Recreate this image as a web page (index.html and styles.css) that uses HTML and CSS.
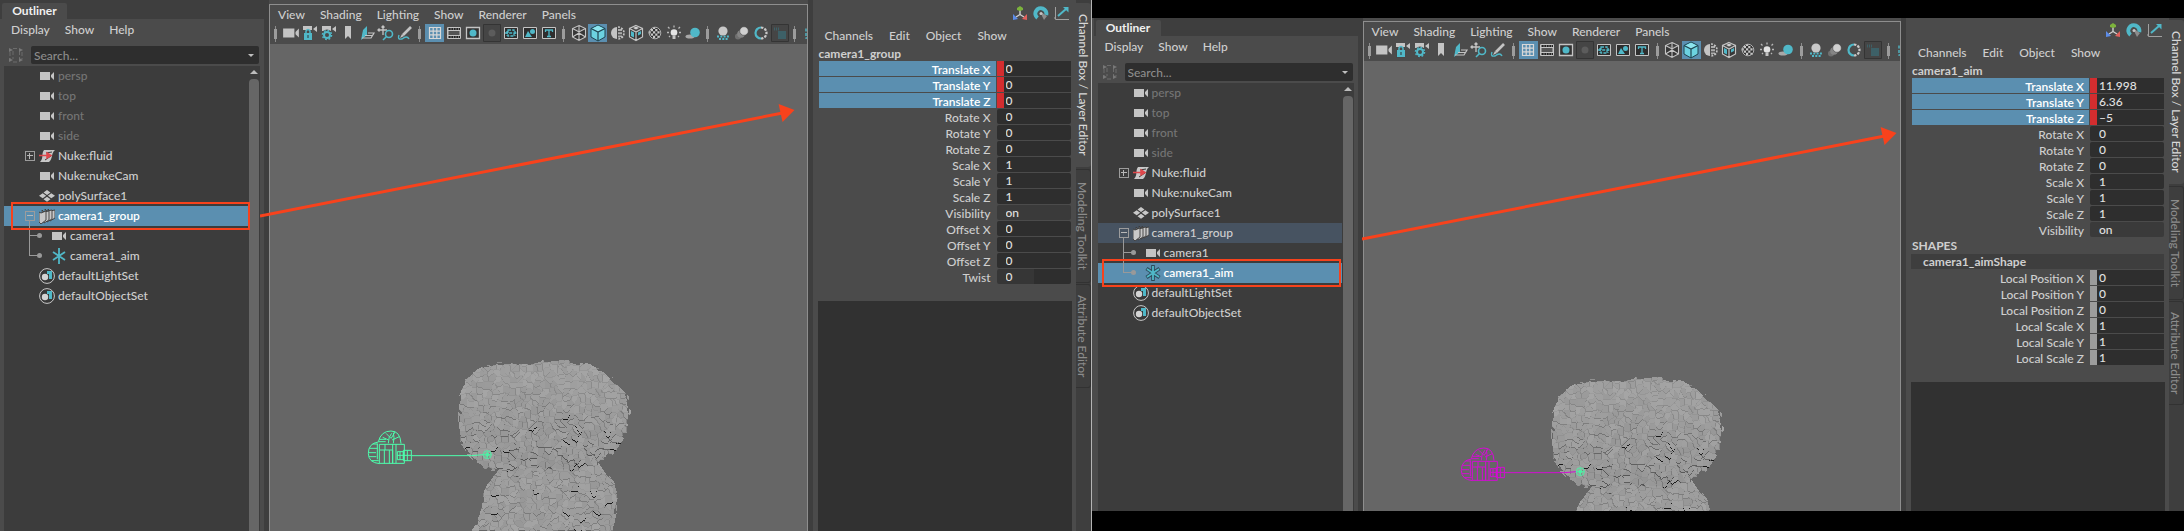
FILE: index.html
```html
<!DOCTYPE html>
<html lang="en">
<head>
<meta charset="utf-8">
<title>Outliner and Channel Box</title>
<link rel="stylesheet" href="styles.css">
</head>
<body>
<svg class="sprite" aria-hidden="true">
  <symbol id="i-cam" viewBox="0 0 16 16"><path fill="#c4c4c4" d="M1 4h10v8H1zM15 4v8l-3-3V7z"/></symbol>
  <symbol id="i-fluid" viewBox="0 0 16 16"><path fill="#c8c8c8" d="M5 2h11c-4 3-2 9-6 12H1c4-4 1-8 4-12z"/><path stroke="#3c3c3c" fill="none" d="M7 5l6-1M6 12l6-4"/><path stroke="#e0484c" stroke-width="1.500" fill="#e0484c" d="M0 7.500h8M8 5l4 2.500-4 2.500z"/></symbol>
  <symbol id="i-poly" viewBox="0 0 16 16"><path fill="#c8c8c8" d="M8 2l3.500 2.500L8 7 4.500 4.500zM3.700 5.300l3.500 2.500-3.500 2.500L0 7.800zM12.300 5.300L16 7.800l-3.700 2.500-3.500-2.500zM8 8.700l3.500 2.500L8 13.700l-3.500-2.500z"/></symbol>
  <symbol id="i-group" viewBox="0 0 16 16"><g fill="#c8c8c8" stroke="#3a3a3a" stroke-width=".9"><path d="M9 1l2 2 5-1v8l-5 3z"/><path d="M6 1l2 2 5-1v9l-5 3z"/><path d="M3 2l2 2 5-1v9l-5 3z"/><path d="M0 4l2 1 5-2v9l-5 4-2-2z"/></g></symbol>
  <symbol id="i-aim" viewBox="0 0 16 16"><path stroke="#50b8c8" stroke-width="1.800" d="M8 0v16M2 4l12 8M14 4L2 12"/></symbol>
  <symbol id="i-aims" viewBox="0 0 16 16"><path stroke="#2c4a58" stroke-width="3.600" d="M8 0v16M1.500 3.500l13 9M14.500 3.500l-13 9"/><path stroke="#50b8c8" stroke-width="1.800" d="M8 1v14M2 4l12 8M14 4L2 12"/></symbol>
  <symbol id="i-set" viewBox="0 0 16 16"><circle cx="8" cy="8" r="7.400" fill="#383838" stroke="#c8c8c8"/><path fill="#50b8c8" d="M8 3h5v8h-3V6H8z"/><circle cx="6" cy="9" r="3.200" fill="#d4d4d4"/></symbol>
  <symbol id="i-lock" viewBox="0 0 18 18"><path fill="#c4c4c4" d="M2 2h9v5H2zM16 2v6l-4-3z"/><path fill="#484848" d="M2 6h9v11H2z"/><path fill="#50b8c8" d="M3 9h8v7H3z"/><path fill="none" stroke="#50b8c8" stroke-width="1.500" d="M5 9V7q2-3 4 0v2"/><path fill="#333" d="M6.500 11h1v3h-1z"/></symbol>
  <symbol id="i-gear" viewBox="0 0 18 18"><path fill="#c4c4c4" d="M2 2h9v5H2zM16 2v6l-4-3z"/><circle cx="7" cy="11" r="5.500" fill="#484848"/><circle cx="7" cy="11" r="3" fill="none" stroke="#50b8c8" stroke-width="2"/><circle cx="7" cy="11" r="4.600" fill="none" stroke="#50b8c8" stroke-width="1.400" stroke-dasharray="1.800 1.800"/></symbol>
  <symbol id="i-mark" viewBox="0 0 18 18"><path fill="#c4c4c4" d="M6 2h6v13l-3-3-3 3z"/></symbol>
  <symbol id="i-plane" viewBox="0 0 18 18"><path fill="#50b8c8" d="M9 2v9l-6 5 2-10z"/><path fill="none" stroke="#c4c4c4" stroke-width="1.200" d="M10 9h6l-3 5H4M7 11.500h7"/></symbol>
  <symbol id="i-pan" viewBox="0 0 18 18"><path stroke="#c4c4c4" stroke-width="1.300" fill="none" d="M6 2v9M1 6h9M4.500 3.500L6 2l1.500 1.500M2.500 4.500L1 6l1.500 1.500"/><circle cx="12" cy="10" r="3.500" fill="#484848" stroke="#50b8c8" stroke-width="1.600"/><path stroke="#50b8c8" stroke-width="1.600" d="M9.500 12.500L6 16"/></symbol>
  <symbol id="i-pen" viewBox="0 0 18 18"><path stroke="#c4c4c4" stroke-width="2.600" d="M15 3L7 11"/><path fill="#c4c4c4" d="M6 10l2 2-4 2z"/><path stroke="#50b8c8" stroke-width="1.400" fill="none" d="M3 11q-2 5 3 4 5-4 7 0"/></symbol>
  <symbol id="i-grid" viewBox="0 0 18 18"><path fill="none" stroke="#d8d8d8" stroke-width="1.200" d="M3.500 3.500h11v11h-11zM7.200 3.500v11M10.800 3.500v11M3.500 7.200h11M3.500 10.800h11"/></symbol>
  <symbol id="i-film" viewBox="0 0 18 18"><path fill="#222" stroke="#c4c4c4" d="M2.500 3.500h13v11h-13z"/><path fill="#555" stroke="#c4c4c4" d="M3 6.500h12v5H3z"/><path stroke="#c4c4c4" stroke-dasharray="1 1.500" d="M3 5h12M3 13h12"/></symbol>
  <symbol id="i-dot" viewBox="0 0 18 18"><path fill="#333" stroke="#c4c4c4" stroke-width="1.300" d="M2.500 3.500h13v11h-13z"/><circle cx="9" cy="9" r="3.500" fill="#50b8c8"/></symbol>
  <symbol id="i-dim" viewBox="0 0 18 18"><path fill="#454545" stroke="#343434" d="M.5.5h17v17H.5z"/><circle cx="9" cy="9" r="3.500" fill="#5c5c5c"/></symbol>
  <symbol id="i-gate" viewBox="0 0 18 18"><path fill="#2e2e2e" stroke="#c4c4c4" d="M2.500 3.500h13v11h-13z"/><path fill="none" stroke="#50b8c8" stroke-width="1.300" stroke-dasharray="3 1.200" d="M6 6h6v6H6zM3 9h12M5 7v5M13 7v5"/></symbol>
  <symbol id="i-safe" viewBox="0 0 18 18"><path fill="#2e2e2e" stroke="#c4c4c4" d="M2.500 3.500h13v11h-13z"/><path fill="#50b8c8" d="M4 13l3-6 4 6z"/><circle cx="11.500" cy="7.500" r="2.500" fill="#50b8c8"/></symbol>
  <symbol id="i-title" viewBox="0 0 18 18"><path fill="#2e2e2e" stroke="#c4c4c4" d="M2.500 3.500h13v11h-13z"/><path fill="none" stroke="#50b8c8" stroke-width="1.300" d="M5.500 8V6h7v2M9 6v6.500M7 12.500h4"/></symbol>
  <symbol id="i-wire" viewBox="0 0 18 18"><path fill="#363636" stroke="#c4c4c4" stroke-width="1.100" d="M9 1.500l6.500 3v8.500L9 16.500 2.500 13V4.500zM2.500 4.500L9 8l6.500-3.500M9 8v8.500M9 1.500V8M2.500 13L9 9l6.500 4"/></symbol>
  <symbol id="i-cube" viewBox="0 0 18 18"><path fill="#6cd2e0" stroke="#1f4450" d="M9 1l7 3.500V13l-7 4-7-4V4.500z"/><path fill="#8ce4ee" d="M9 1.800L15 4.700 9 8 3 4.700z"/><path fill="none" stroke="#1f4450" stroke-width="1.200" d="M2 4.500L9 8l7-3.500M9 8v9"/></symbol>
  <symbol id="i-half" viewBox="0 0 18 18"><path fill="#c4c4c4" d="M9 3a6 6 0 0 0 0 12z"/><path fill="none" stroke="#c4c4c4" stroke-width="1.600" stroke-dasharray="2 1.200" d="M10 3a6 6 0 0 1 0 12M11 5v9M13 5v8"/></symbol>
  <symbol id="i-tex" viewBox="0 0 18 18"><path fill="#363636" stroke="#c4c4c4" stroke-width="1.200" d="M9 1.500l6.500 3v8.500L9 16.500 2.500 13V4.500zM2.500 4.500L9 8l6.500-3.500M9 8v8.500"/><path fill="#50b8c8" d="M4 7l3 1.500v5L4 12zM11 8.500L14 7v3l-3 1.500z"/><path fill="#d0d0d0" d="M9 2.500l3 1.500-3 1.500L6 4z"/></symbol>
  <symbol id="i-check" viewBox="0 0 18 18"><circle cx="9" cy="9" r="6" fill="#303030"/><path stroke="#c8c8c8" stroke-width="2.200" stroke-dasharray="2.200 2.200" d="M7 4h4.400M4.800 6.200h8.800M2.600 8.400h13.200M4.800 10.600h8.800M7 12.800h6.600"/><circle cx="9" cy="9" r="5.800" fill="none" stroke="#b0b0b0"/></symbol>
  <symbol id="i-bulb" viewBox="0 0 18 18"><circle cx="9" cy="8.500" r="3.300" fill="#e4e4e4"/><path fill="#c4c4c4" d="M7.500 12h3v3h-3z"/><path stroke="#b8b8b8" stroke-width="1.300" d="M9 1.500v2M3 3l1.500 1.500M15 3l-1.500 1.500M2 8.500h2M14 8.500h2M4 13l1-1M14 13l-1-1"/></symbol>
  <symbol id="i-shadow" viewBox="0 0 18 18"><ellipse cx="6" cy="12.500" rx="4.500" ry="2" fill="#a8a8a8"/><circle cx="11" cy="8.500" r="4.800" fill="#50b8c8"/></symbol>
  <symbol id="i-ao" viewBox="0 0 18 18"><path stroke="#50b8c8" stroke-width="1.800" stroke-dasharray="2 1.300" d="M3 12.500h12M5 15h9"/><circle cx="9" cy="7" r="4.600" fill="#c8c8c8"/></symbol>
  <symbol id="i-blur" viewBox="0 0 18 18"><circle cx="5" cy="12.500" r="3" fill="#707070"/><circle cx="8" cy="10" r="3.800" fill="#858585"/><circle cx="11" cy="7" r="4.300" fill="#d0d0d0" stroke="#484848" stroke-width=".6"/></symbol>
  <symbol id="i-aa" viewBox="0 0 18 18"><path fill="none" stroke="#50b8c8" stroke-width="2.200" d="M9 3.500a5.500 5.500 0 0 0 0 11"/><path fill="none" stroke="#c8c8c8" stroke-width="2.200" stroke-dasharray="2.400 1.200" d="M9 3.500a5.500 5.500 0 0 1 0 11"/></symbol>
  <symbol id="i-off" viewBox="0 0 18 18"><path fill="#454545" stroke="#343434" d="M.5.5h17v17H.5z"/><path fill="#3d6067" d="M7 7h8v8H7z"/><path stroke="#3d6067" stroke-width="3" stroke-dasharray="1 1" d="M3 5h6"/></symbol>
  <symbol id="i-iso" viewBox="0 0 18 18"><path fill="none" stroke="#50b8c8" stroke-width="1.400" stroke-dasharray="3 1.500" d="M9 4H5v10h4"/></symbol>
  <symbol id="i-axis" viewBox="0 0 16 16"><path stroke="#d0d0d0" stroke-width="1.400" fill="none" d="M8 5v5M8 9.500l-4 2.500M8 9.500l4 2.500"/><path fill="#7cb33c" d="M8 1l3 2v2l-3 1-3-1V3z"/><path fill="#5c8ce8" d="M1 9l5 5-5 1z"/><path fill="#e0605c" d="M15 9v6l-5-1z"/></symbol>
  <symbol id="i-speed" viewBox="0 0 16 16"><path fill="none" stroke="#50b8c8" stroke-width="4" d="M4.500 13A5.500 5.500 0 1 1 13.200 10"/><path fill="#8c8c8c" d="M8 7l6 4-3 4-2-4z"/><circle cx="8" cy="8.500" r="1.500" fill="#c4c4c4"/></symbol>
  <symbol id="i-graph" viewBox="0 0 16 16"><path stroke="#a0a0a0" fill="none" d="M1.500 2v12.500H15M0 13h2"/><path stroke="#50b8c8" stroke-width="2" d="M4 11l8-7"/><path fill="#50b8c8" d="M9 2h5.500v5.500z"/></symbol>
  <symbol id="i-filter" viewBox="0 0 16 16"><path fill="none" stroke="#6c6c6c" stroke-dasharray="4 2" d="M5 1.500h6M5 15h6M2 5v7M14 5v7M5 4v8M11.500 4v8"/><path fill="#777" d="M1 1l4 2-4 2zM11 1l4 2-4 2zM1 11l4 2-4 2zM11 11l4 2-4 2z"/></symbol>
</svg>
<main class="desk" id="desk"></main>
<script src="app.js"></script>
</body>
</html>
```
FILE: styles.css
```css
* { box-sizing: border-box; }
body { margin: 0; background: #000; color: #cfcfcf; font: 500 12px/16px Lato, "Open Sans", sans-serif; }
button, input { font: inherit; color: inherit; border: 0; padding: 0; margin: 0; background: none; min-width: 0; }
.sprite { position: absolute; width: 0; height: 0; }
.desk { display: flex; height: 100vh; overflow: hidden; }
.window { flex: 1 1 0; display: flex; min-width: 0; background: #4b4b4b; }
.window.first { border-right: 1px solid #b4b4b4; }
.window.second { margin: 18px 0 20px; padding-left: 2px; }

.outliner { flex: none; width: 269px; background: #3e3e3e; padding: 3px 5px 0 0; display: flex; flex-direction: column; }
.second .outliner { padding-top: 2px; }
.dock-tab { align-self: flex-start; margin-left: 2px; width: 65px; height: 16px; background: #4b4b4b; color: #f0f0f0; font-weight: 700; border-radius: 2px 2px 0 0; text-align: center; }
.panel { flex: 1; background: #4b4b4b; padding: 3px 4px 0; display: flex; flex-direction: column; min-height: 0; }
.menu { display: flex; gap: 15px; }
.panel .menu { padding-left: 7px; }
.search { display: flex; gap: 7px; align-items: center; height: 18px; margin: 8px 1px 2px 4px; }
.search svg { width: 16px; height: 16px; flex: none; }
.search-box { flex: 1; display: flex; align-items: center; background: #2e2e2e; border-radius: 2px; padding: 0 5px 0 3px; height: 18px; }
.search-box input { flex: 1; outline: 0; height: 18px; }
.search-box input::placeholder { color: #8c8c8c; opacity: 1; }
.down { border: 3px solid transparent; border-top-color: #c0c0c0; border-bottom: 0; }
.list { flex: 1; display: flex; background: #3c3c3c; min-height: 0; overflow: hidden; }
.tree { flex: 1; list-style: none; margin: 0; padding: 0; }
.tree li { position: relative; display: flex; align-items: center; height: 20px; padding-left: 35px; gap: 3px; }
.tree li.child { padding-left: 47px; }
.tree svg { width: 16px; height: 16px; flex: none; }
.tree .dim { color: #757575; }
.tree .sel { background: #5b8fb0; color: #fff; font-weight: 600; }
.tree .parent { background: #475361; }
.expand { position: absolute; left: 21px; top: 5px; width: 10px; height: 10px; border: 1px solid #9c9c9c; }
.expand::before { content: ""; position: absolute; left: 1px; right: 1px; top: 3px; height: 1px; background: #b8b8b8; }
.plus::after { content: ""; position: absolute; top: 1px; bottom: 1px; left: 3px; width: 1px; background: #b8b8b8; }
.branch { position: absolute; left: 25px; top: -6px; width: 10px; height: 16px; border: solid #999; border-width: 0 0 1px 1px; }
.child + .child .branch { top: -10px; height: 20px; }
.branch::after { content: ""; position: absolute; right: -3px; bottom: -3px; width: 5px; height: 5px; border-radius: 50%; background: #999; }
.mark { position: absolute; left: 7px; right: -2px; top: -4px; bottom: -4px; border: 2px solid #f8421c; z-index: 3; }
.second .mark { left: 4px; right: 1px; }
.scroll { flex: none; width: 11px; margin-left: 1px; padding: 4px 1px 0 0; display: flex; flex-direction: column; gap: 5px; align-items: center; }
.scroll::before { content: ""; border: 4px solid transparent; border-bottom-color: #bcbcbc; border-top: 0; }
.scroll::after { content: ""; flex: 1; align-self: stretch; background: #666; border-radius: 4px 4px 0 0; }

.viewport { position: relative; flex: 1; min-width: 0; margin: 4px 0 0; border: 1px solid #8e8e8e; border-width: 1px 1px 0; display: flex; flex-direction: column; }
.second .viewport { margin-top: 3px; }
.viewport .menu { padding: 1px 8px 0; height: 19px; }
.tools { display: flex; height: 20px; padding-bottom: 1px; overflow: hidden; }
.tools button { flex: none; width: 19px; height: 18px; }
.tools button.on { background: #5b8fb0; }
.tools svg { display: block; width: 18px; height: 18px; margin: 0 auto; }
.sep { flex: none; width: 11px; display: flex; justify-content: center; align-items: center; background: linear-gradient(#8c8c8c, #8c8c8c) center / 1px 16px no-repeat; }
.sep::before { content: ""; width: 3px; height: 10px; background: #9c9c9c; }
.scene { position: relative; flex: 1; overflow: hidden; background: #666; }
.rock, .rig { position: absolute; left: 13%; top: 296px; width: 320px; height: 191px; }
.arrow { position: absolute; left: -10px; top: 0; width: calc(100% + 8px); height: 240px; z-index: 2; }
.second .arrow { left: -2px; top: 6px; }

.channels { flex: none; width: 268px; border-left: 5px solid #3e3e3e; padding: 5px 4px 0 5px; display: flex; flex-direction: column; }
.second .channels { padding-top: 4px; }
.icons { display: flex; justify-content: flex-end; gap: 5px; padding-right: 2px; height: 16px; }
.icons button, .icons svg { display: block; width: 16px; height: 16px; }
.channels .menu { padding: 5px 7px 0; height: 25px; gap: 16px; }
.object { font-weight: 700; height: 15px; padding-left: 1px; }
.attrs { border-collapse: collapse; width: 100%; table-layout: fixed; }
.attrs td, .attrs th { padding: 0; height: 16px; text-align: right; font-weight: 500; }
.attrs .name { width: 178px; }
.attrs label { display: block; height: 15px; line-height: 17px; margin: 0 0 1px 1px; padding-right: 5px; }
.attrs .hot label { background: #5b8fb0; color: #fff; font-weight: 600; }
.attrs input { display: block; width: calc(100% - 2px); height: 15px; margin: 0 0 1px 1px; padding-left: 9px; background: #2e2e2e; border-radius: 2px; color: #e0e0e0; outline: 0; }
.attrs .hot input { border-left: 7px solid #d32d2f; border-radius: 0; padding-left: 2px; }
.attrs .local input { border-left: 7px solid #9c9c9c; border-radius: 0; padding-left: 2px; }
.attrs .bool input { background: #3a3a3a; }
.attrs .twist input { background: linear-gradient(90deg, #363636 50%, #2e2e2e 50%); }
.shapes { height: 16px; font-weight: 700; padding-left: 1px; }
.shape { height: 15px; margin: 0 1px 1px 0; padding-left: 12px; background: #3e3e3e; font-weight: 700; }
.layers { flex: 1; margin-top: 16px; background: #313131; }
.side { flex: none; width: 15px; background: #3e3e3e; padding-top: 3px; display: flex; flex-direction: column; gap: 2px; }
.second .side { padding-top: 2px; }
.side button { writing-mode: vertical-rl; width: 15px; line-height: 15px; text-align: center; color: #8c8c8c; border: 1px solid #323232; border-left: 0; border-radius: 0 3px 3px 0; height: 114px; }
.side button.cur { background: #4b4b4b; color: #d8d8d8; border: 0; height: 164px; }
.side button:last-child { height: 104px; margin-top: -1px; }
```
FILE: app.js
```js
const icon = (n) => `<svg aria-hidden="true"><use href="#i-${n}"/></svg>`;
const menu = (items) => `<nav class="menu">${items.map((t) => `<button type="button">${t}</button>`).join("")}</nav>`;

const nodes = [
  ["cam", "persp", "dim"], ["cam", "top", "dim"], ["cam", "front", "dim"], ["cam", "side", "dim"],
  ["fluid", "Nuke:fluid", ""], ["cam", "Nuke:nukeCam", ""], ["poly", "polySurface1", ""],
  ["group", "camera1_group", ""], ["cam", "camera1", "child"], ["aim", "camera1_aim", "child"],
  ["set", "defaultLightSet", ""], ["set", "defaultObjectSet", ""],
];
const tools = [
  ["cam", "lock", "gear", "mark", "plane", "pan", "pen"],
  ["grid", "film", "dot", "dim", "gate", "safe", "title"],
  ["wire", "cube", "half", "tex", "check", "bulb", "shadow"],
  ["ao", "blur", "aa", "off"], ["iso"],
];
const base = (t) => [
  ["Translate X", t[0], "hot"], ["Translate Y", t[1], "hot"], ["Translate Z", t[2], "hot"],
  ["Rotate X", 0], ["Rotate Y", 0], ["Rotate Z", 0],
  ["Scale X", 1], ["Scale Y", 1], ["Scale Z", 1], ["Visibility", "on", "bool"],
];
const windows = [
  { cls: "first", object: "camera1_group", color: "#4dffad",
    rows: [...base([0, 0, 0]), ["Offset X", 0], ["Offset Y", 0], ["Offset Z", 0], ["Twist", 0, "twist"]] },
  { cls: "second", object: "camera1_aim", color: "#d40cd4", rows: base(["11.998", "6.36", "–5"]),
    shape: "camera1_aimShape",
    local: [["Local Position X", 0], ["Local Position Y", 0], ["Local Position Z", 0],
      ["Local Scale X", 1], ["Local Scale Y", 1], ["Local Scale Z", 1]].map((r) => [...r, "local"]) },
];

function tree(w) {
  return nodes.map(([ic, name, cls]) => {
    const sel = name === w.object;
    const parent = name === "camera1_group" && !sel;
    const extra = name === "Nuke:fluid" ? '<i class="expand plus"></i>'
      : ic === "group" ? '<i class="expand"></i>' : cls === "child" ? '<i class="branch"></i>' : "";
    const glyph = sel && ic === "aim" ? "aims" : ic;
    return `<li class="${cls}${sel ? " sel" : ""}${parent ? " parent" : ""}">${extra}${icon(glyph)}<span>${name}</span>${sel ? '<i class="mark"></i>' : ""}</li>`;
  }).join("");
}

function table(rows, w) {
  return `<table class="attrs"><tbody>${rows.map(([n, v, c]) => {
    const id = `${w.cls}-${n.replace(/ /g, "-")}`;
    return `<tr class="${c || ""}"><th class="name"><label for="${id}">${n}</label></th><td><input id="${id}" value="${v}"></td></tr>`;
  }).join("")}</tbody></table>`;
}

function rig(c) {
  return `<svg class="rig" viewBox="0 0 960 573" fill="none" stroke="${c}" stroke-width="3">
    <path d="M115 305q8-32 38-32 28 0 30 38M128 292l18 8M138 280l14 14M165 276l-12 20M178 290l-22 10M145 310q0-20 10-30M160 310q4-18 0-32M115 305h22M118 298h20"/>
    <path d="M115 306q-30 4-30 34 0 28 34 31M88 325h24M86 338h22M87 350h22M94 362h22M98 312h16M112 312v46"/>
    <path d="M118 313h75v57h-75zM120 330h38v40M133 330v40M148 330v40M158 313v57M135 313v17M168 313v57"/>
    <path d="M172 335h18v24h-18zM190 331h24v31h-24zM172 346h42M180 335v24M202 331v31"/>
    <path d="M214 347h180l36-3"/><circle cx="442" cy="344" r="12" stroke="#4df0a4"/><circle cx="442" cy="344" r="5" fill="#4df0a4" stroke="#4df0a4"/><path stroke="#4df0a4" d="M430 344h24M442 334v20"/>
  </svg>`;
}

document.getElementById("desk").innerHTML = windows.map((w) => `
<section class="window ${w.cls}">
  <aside class="outliner">
    <div class="dock-tab">Outliner</div>
    <div class="panel">
      ${menu(["Display", "Show", "Help"])}
      <div class="search">${icon("filter")}<div class="search-box"><input type="text" placeholder="Search..." aria-label="Search"><i class="down"></i></div></div>
      <div class="list"><ul class="tree">${tree(w)}</ul><div class="scroll"></div></div>
    </div>
  </aside>
  <div class="viewport">
    ${menu(["View", "Shading", "Lighting", "Show", "Renderer", "Panels"])}
    <div class="tools">${tools.map((g) => `<i class="sep"></i>${g.map((n) => `<button type="button" aria-label="${n}"${n === "grid" || n === "cube" ? ' class="on"' : ""}>${icon(n)}</button>`).join("")}`).join("")}</div>
    <div class="scene"><canvas class="rock" width="320" height="191"></canvas>${rig(w.color)}</div>
    <svg class="arrow" viewBox="0 0 546 240" preserveAspectRatio="none"><path d="M0 211L524 108" stroke="#f8421c" stroke-width="3"/><path d="M520 99l16 6-12 12z" fill="#f8421c"/></svg>
  </div>
  <section class="channels">
    <div class="icons">${["axis", "speed", "graph"].map((n) => `<button type="button" aria-label="${n}">${icon(n)}</button>`).join("")}</div>
    ${menu(["Channels", "Edit", "Object", "Show"])}
    <div class="object">${w.object}</div>
    ${table(w.rows, w)}
    ${w.shape ? `<div class="shapes">SHAPES</div><div class="shape">${w.shape}</div>${table(w.local, w)}` : ""}
    <div class="layers"></div>
  </section>
  <nav class="side"><button type="button" class="cur">Channel Box / Layer Editor</button><button type="button">Modeling Toolkit</button><button type="button">Attribute Editor</button></nav>
</section>`).join("");

const body = [[165, 125], [150, 140], [143, 152], [140, 170], [137, 182], [131, 191], [271, 191], [275, 172], [277, 156], [272, 141], [264, 132], [255, 118]];
const head = [[119, 72], [120, 55], [126, 40], [133, 31], [143, 26], [158, 23], [177, 24], [200, 21], [227, 21], [247, 24], [263, 31], [276, 43], [286, 53], [289, 72], [285, 93], [275, 108], [266, 118], [252, 123], [236, 130], [220, 128], [206, 130], [193, 127], [177, 135], [166, 131], [150, 129], [136, 121], [128, 113], [121, 102], [119, 88]];

function inside(x, y, poly) {
  let hit = false;
  for (let i = 0, j = poly.length - 1; i < poly.length; j = i++) {
    const [ax, ay] = poly[i], [bx, by] = poly[j];
    if ((ay > y) !== (by > y) && x < ((bx - ax) * (y - ay)) / (by - ay) + ax) hit = !hit;
  }
  return hit;
}
const rand = (a, b, c) => {
  const s = Math.sin(a * 127.1 + b * 311.7 + c * 74.7) * 43758.5453;
  return s - Math.floor(s);
};
/* Voxel-like stone: blocky cells whose lower and right edges fall into shade. */
function cell(x, y, s) {
  const cw = 6, ch = 6, gx = Math.floor(x / cw), gy = Math.floor(y / ch);
  let best = 1e9, out = [0, 0];
  for (let i = gx - 1; i <= gx + 1; i++) for (let j = gy - 1; j <= gy + 1; j++) {
    const px = (i + rand(i, j, s)) * cw, py = (j + rand(i, j, s + 1)) * ch;
    const d = Math.max(Math.abs(x - px), Math.abs(y - py) * 0.9);
    if (d < best) { best = d; out = [i, j]; }
  }
  return out;
}
function paint(canvas) {
  const ctx = canvas.getContext("2d");
  for (let y = 0; y < 191; y++) for (let x = 100; x < 300; x++) {
    const c = cell(x, y, 1);
    const ox = (rand(c[0], c[1], 9) - 0.5) * 4, oy = (rand(c[0], c[1], 10) - 0.5) * 4;
    const inHead = inside(x + ox, y + oy, head);
    if (!inHead && !inside(x + ox, y + oy, body)) continue;
    const below = cell(x, y + 1, 1), right = cell(x + 1, y, 1);
    const low = inHead ? Math.max(0, (y - 45) / 75) : 0.3;
    let v = 160 - low * 6 + (rand(c[0], c[1], 3) - 0.5) * 12;
    const r = rand(c[0], c[1], 5);
    if (below[1] !== c[1] || below[0] !== c[0]) v -= r < 0.1 * low ? 130 : r < 0.4 ? 46 * (low + 0.4) : 8;
    else if (right[0] !== c[0] && r > 0.55) v -= 18 + 10 * low;
    v = Math.round(v);
    ctx.fillStyle = `rgb(${v},${v},${v})`;
    ctx.fillRect(x, y, 1, 1);
  }
}
document.querySelectorAll(".rock").forEach(paint);
```
